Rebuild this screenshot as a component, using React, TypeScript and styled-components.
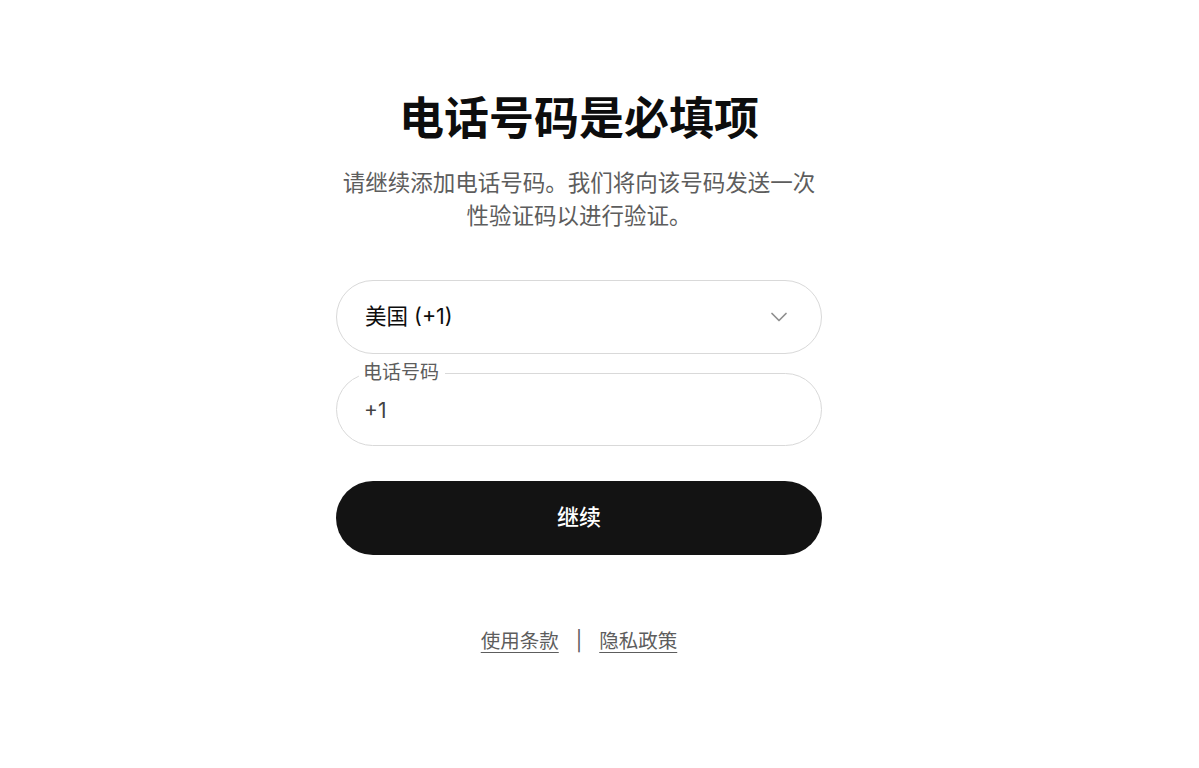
import * as React from 'react';
import { createGlobalStyle, styled } from 'styled-components';
import { ChevronDown } from 'lucide-react';

const GlobalStyle = createGlobalStyle`
  html, body {
    margin: 0;
    padding: 0;
    background: #ffffff;
  }
  body {
    font-family: Inter, "Noto Sans CJK SC", "Noto Sans", sans-serif;
    color: #0d0d0d;
  }
`;

const Page = styled.main`
  min-height: 100vh;
  box-sizing: border-box;
  display: flex;
  flex-direction: column;
  align-items: center;
  padding: 91px 41px 0 0;
`;

const Column = styled.section`
  width: 486px;
  display: flex;
  flex-direction: column;
  align-items: stretch;
`;

const Title = styled.h1`
  margin: 0;
  font-size: 45px;
  line-height: 56px;
  font-weight: 700;
  text-align: center;
  color: #0d0d0d;
`;

const Subtitle = styled.p`
  margin: 19px 0 0;
  font-size: 22.5px;
  line-height: 33px;
  text-align: center;
  color: #5d5d5d;
`;

const Form = styled.form`
  margin-top: 48px;
  display: flex;
  flex-direction: column;
`;

const SelectBox = styled.button`
  box-sizing: border-box;
  height: 74px;
  width: 100%;
  display: flex;
  align-items: center;
  justify-content: space-between;
  padding: 0 28px 3px 28px;
  border: 1px solid #d9d9d9;
  border-radius: 999px;
  background: #fff;
  font-family: inherit;
  font-size: 21.5px;
  line-height: 26px;
  color: #0d0d0d;
  cursor: pointer;
  text-align: left;
`;

const Chevron = styled(ChevronDown)`
  color: #8f8f8f;
  flex-shrink: 0;
  margin-top: 3px;
`;

const Field = styled.fieldset`
  margin: 8px 0 0;
  padding: 0 22px 9px 22px;
  border: 1px solid #d9d9d9;
  border-radius: 999px;
  min-width: 0;
`;

const Legend = styled.legend`
  padding: 0 6px 0 4px;
  font-size: 19px;
  line-height: 22px;
  color: #5d5d5d;
`;

const PhoneInput = styled.input`
  box-sizing: border-box;
  display: block;
  width: 100%;
  height: 52px;
  padding: 0 0 0 5px;
  border: none;
  outline: none;
  background: transparent;
  font-family: inherit;
  font-size: 21px;
  color: #444;
`;

const PrimaryButton = styled.button`
  margin-top: 35px;
  height: 74px;
  width: 100%;
  padding: 0 0 2px;
  border: none;
  border-radius: 999px;
  background: #131313;
  color: #ffffff;
  font-family: inherit;
  font-size: 22px;
  line-height: 26px;
  font-weight: 500;
  cursor: pointer;
`;

const Footer = styled.nav`
  margin-top: 72px;
  display: flex;
  justify-content: center;
  align-items: center;
  gap: 17px;
  font-size: 19.5px;
  line-height: 28px;
  color: #5d5d5d;
`;

const FooterLink = styled.a`
  color: #5d5d5d;
  text-decoration: underline;
  text-underline-offset: 4px;
  text-decoration-thickness: 1px;
`;

const Divider = styled.span`
  color: #5d5d5d;
`;

export default function App() {
  const [phone, setPhone] = React.useState('+1');

  return (
    <>
      <GlobalStyle />
      <Page>
        <Column>
          <Title>电话号码是必填项</Title>
          <Subtitle>请继续添加电话号码。我们将向该号码发送一次性验证码以进行验证。</Subtitle>
          <Form onSubmit={(e) => e.preventDefault()}>
            <SelectBox type="button">
              <span>美国 (+1)</span>
              <Chevron size={28} strokeWidth={1.5} />
            </SelectBox>
            <Field>
              <Legend>电话号码</Legend>
              <PhoneInput
                type="tel"
                value={phone}
                onChange={(e) => setPhone(e.target.value)}
              />
            </Field>
            <PrimaryButton type="submit">继续</PrimaryButton>
          </Form>
          <Footer>
            <FooterLink href="#">使用条款</FooterLink>
            <Divider>|</Divider>
            <FooterLink href="#">隐私政策</FooterLink>
          </Footer>
        </Column>
      </Page>
    </>
  );
}
